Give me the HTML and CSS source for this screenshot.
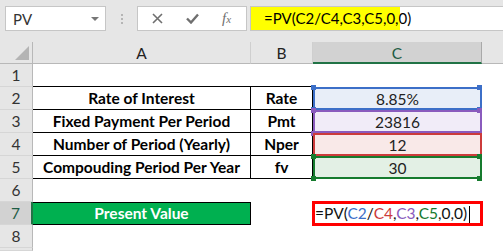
FILE: index.html
```html
<!DOCTYPE html>
<html>
    <head>
        <link rel="stylesheet" href="styles.css">
    </head>
    <body>
        <div class="toolbar">
            <div class="namebox">
                <span>PV</span>
                <span class="drop"></span>
            </div>
            <div class="grip"><i></i><i></i><i></i></div>
            <div class="fxbox">
                <svg width="11" height="11" viewBox="0 0 11 11"><path d="M1 1 L10 10 M10 1 L1 10" stroke="#6f6f6f" stroke-width="1.6" fill="none"/></svg>
                <svg width="13" height="11" viewBox="0 0 13 11"><path d="M1 5.5 L5 9.5 L12 1.5" stroke="#6f6f6f" stroke-width="2.4" fill="none"/></svg>
                <span class="fx">f<small>x</small></span>
            </div>
            <div class="formula">
                <span class="hl">=PV(C2/C4,C3,C5,0,0)</span>
            </div>
        </div>
        <div class="sheet">
            <div class="colhead corner"><span class="tri"></span></div>
            <div class="colhead">A</div>
            <div class="colhead">B</div>
            <div class="colhead sel">C</div>
            <div class="colhead last"></div>

            <div class="rowhead">1</div>
            <div class="cell top"></div>
            <div class="cell top"></div>
            <div class="cell"></div>
            <div class="cell"></div>

            <div class="rowhead">2</div>
            <div class="cell tbl">Rate of Interest</div>
            <div class="cell tbl">Rate</div>
            <div class="cell rng blue">8.85%</div>
            <div class="cell"></div>

            <div class="rowhead">3</div>
            <div class="cell tbl">Fixed Payment Per Period</div>
            <div class="cell tbl">Pmt</div>
            <div class="cell rng purple">23816</div>
            <div class="cell"></div>

            <div class="rowhead">4</div>
            <div class="cell tbl">Number of Period (Yearly)</div>
            <div class="cell tbl">Nper</div>
            <div class="cell rng red nohandles">12</div>
            <div class="cell"></div>

            <div class="rowhead">5</div>
            <div class="cell tbl">Compouding Period Per Year</div>
            <div class="cell tbl">fv</div>
            <div class="cell rng green">30</div>
            <div class="cell"></div>

            <div class="rowhead">6</div>
            <div class="cell"></div>
            <div class="cell"></div>
            <div class="cell"></div>
            <div class="cell"></div>

            <div class="rowhead sel">7</div>
            <div class="cell pv">Present Value</div>
            <div class="cell"></div>
            <div class="cell edit">=PV(<span class="c-blue">C2</span>/<span class="c-red">C4</span>,<span class="c-purple">C3</span>,<span class="c-green">C5</span>,0,0)<span class="caret"></span></div>
            <div class="cell"></div>

            <div class="rowhead">8</div>
            <div class="cell"></div>
            <div class="cell"></div>
            <div class="cell"></div>
            <div class="cell"></div>

            <div class="rowhead"></div>
            <div class="cell"></div>
            <div class="cell"></div>
            <div class="cell"></div>
            <div class="cell"></div>
        </div>
    </body>
</html>
```
FILE: styles.css
```css
* {
    box-sizing: border-box;
}
body {
    margin: 0;
    width: 503px;
    height: 251px;
    overflow: hidden;
    background-color: #e6e6e6;
    font-family: Lato, "Liberation Sans", sans-serif;
    font-size: 15px;
    color: #000;
}

/* formula bar */
.toolbar {
    display: flex;
    align-items: center;
    height: 42px;
    padding: 6px 0 11px 5px;
}
.namebox {
    width: 101px;
    height: 25px;
    background-color: white;
    border: 1px solid #c6c6c6;
    display: flex;
    align-items: center;
    justify-content: space-between;
    padding: 0 6px 0 7px;
    color: #333;
}
.drop {
    width: 0;
    height: 0;
    border-left: 4px solid transparent;
    border-right: 4px solid transparent;
    border-top: 4px solid #777;
}
.grip {
    width: 31px;
    display: flex;
    flex-direction: column;
    align-items: center;
    gap: 2px;
}
.grip i {
    width: 2px;
    height: 2px;
    background-color: #b5b5b5;
}
.fxbox {
    width: 110px;
    height: 25px;
    background-color: white;
    border: 1px solid #c6c6c6;
    display: flex;
    align-items: center;
    gap: 23px;
    padding-left: 14px;
}
.fx {
    font-family: "Liberation Serif", serif;
    font-style: italic;
    color: #6f6f6f;
    font-size: 15px;
}
.fx small {
    font-size: 11px;
}
.formula {
    flex: 1;
    margin-left: 3px;
    height: 25px;
    background-color: white;
    border-top: 1px solid #c6c6c6;
    border-bottom: 1px solid #c6c6c6;
    border-left: 1px solid #c6c6c6;
}
.hl {
    display: inline-block;
    width: 149px;
    height: 23px;
    line-height: 23px;
    background-color: #ffff00;
    padding-left: 13px;
}

/* grid */
.sheet {
    display: grid;
    grid-template-columns: 33px 218px 62px 169px 1fr;
    grid-template-rows: 22px repeat(8, 23px) 1fr;
    height: 209px;
    background-color: white;
}
.colhead {
    background-color: #e6e6e6;
    border-right: 1px solid #cfcfcf;
    border-bottom: 1px solid #b8b8b8;
    text-align: center;
    line-height: 22px;
    color: #222;
    font-size: 15.5px;
}
.colhead.sel {
    background-color: #d2d2d2;
    border-right: 1px solid #a9a9a9;
    border-bottom: 2px solid #217346;
    color: #1d5c44;
}
.colhead.last {
    border-right: none;
}
.corner {
    position: relative;
    border-right: 1px solid #b8b8b8;
}
.tri {
    position: absolute;
    right: 3px;
    bottom: 3px;
    width: 0;
    height: 0;
    border-left: 14px solid transparent;
    border-bottom: 14px solid #b4b4b4;
}
.rowhead {
    background-color: #e6e6e6;
    border-right: 1px solid #b8b8b8;
    border-bottom: 1px solid #d6d6d6;
    text-align: center;
    line-height: 23px;
    color: #333;
    font-size: 15.5px;
}
.rowhead.sel {
    background-color: #d2d2d2;
    border-right: 2px solid #217346;
    color: #1d5c44;
}
.cell {
    text-align: center;
    line-height: 23px;
    white-space: nowrap;
    font-size: 15.5px;
}
.cell.top {
    border-bottom: 1px solid #000;
}
.tbl {
    font-weight: bold;
    border-right: 1px solid #000;
    border-bottom: 1px solid #000;
}

/* referenced ranges */
.rng {
    position: relative;
    border: 2px solid;
    line-height: 20px;
    color: #222;
}
.rng::before {
    content: "";
    position: absolute;
    left: -4px;
    top: -4px;
    width: 5px;
    height: 5px;
}
.rng.blue {
    border-color: #3c6fc8;
    background-color: #e8eef8;
}
.rng.purple {
    border-color: #8a5bbd;
    background-color: #f1ecf8;
}
.rng.red {
    border-color: #cc3b3b;
    background-color: #f9e9e8;
}
.rng.green {
    border-color: #167b2e;
    background-color: #e3f0e5;
}
.rng.blue::before {
    background-color: #3c6fc8;
    box-shadow: 166px 0 0 #3c6fc8, 0 22px 0 #3c6fc8, 166px 22px 0 #3c6fc8;
}
.rng.purple::before {
    background-color: #8a5bbd;
    box-shadow: 166px 0 0 #8a5bbd, 0 23px 0 #8a5bbd, 166px 23px 0 #8a5bbd;
}
.rng.green::before {
    background-color: #167b2e;
    box-shadow: 166px 0 0 #167b2e, 0 22px 0 #167b2e, 166px 22px 0 #167b2e;
}
.rng.nohandles::before {
    display: none;
}

/* present value */
.pv {
    background-color: #00b050;
    color: white;
    font-weight: bold;
    border: 1px solid #000;
    border-left: none;
    line-height: 21px;
}
.edit {
    text-align: left;
    padding-left: 2px;
    outline: 3px solid #ff0000;
    outline-offset: -2px;
    color: #111;
}
.c-blue { color: #3c6fc8; }
.c-red { color: #cc3b3b; }
.c-purple { color: #8a5bbd; }
.c-green { color: #167b2e; }
.caret {
    display: inline-block;
    width: 1px;
    height: 18px;
    background-color: #000;
    vertical-align: middle;
    margin-left: 2px;
}
```
